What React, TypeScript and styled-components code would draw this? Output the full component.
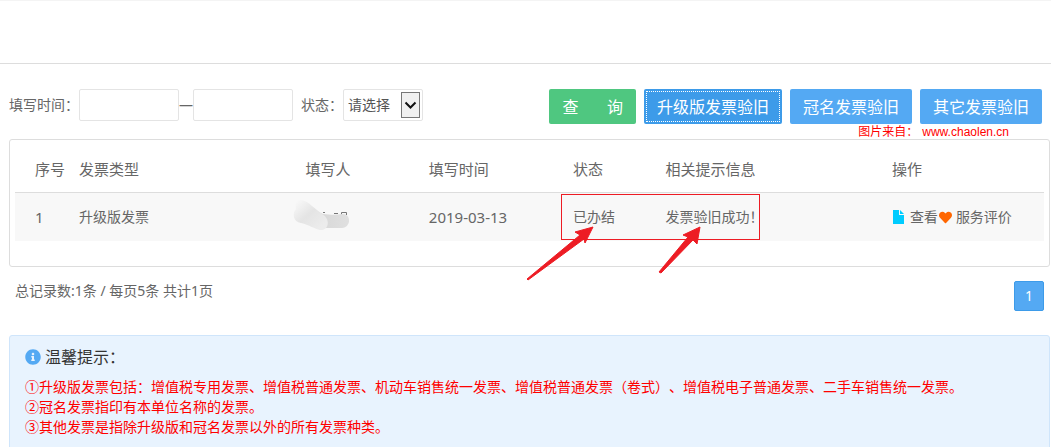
import React from 'react';
import styled, { createGlobalStyle } from 'styled-components';
import { FaHeart, FaInfoCircle } from 'react-icons/fa';

const GlobalStyle = createGlobalStyle`
  * { box-sizing: border-box; }
  body {
    margin: 0;
    background: #fff;
    color: #666;
    font: 14px/20px "Noto Sans", "Noto Sans CJK SC", sans-serif;
    text-spacing-trim: space-all;
  }
  button, input, select { font: inherit; }
`;

const TopBar = styled.header`
  height: 64px;
  border-top: 1px solid #f4f4f4;
  border-bottom: 1px solid #ddd;
`;

const Page = styled.main`
  padding: 25px 1px 0 9px;
`;

const Toolbar = styled.form`
  display: flex;
  align-items: flex-start;
  justify-content: space-between;
  padding-right: 8px;
`;

const Filters = styled.div`
  display: flex;
  align-items: center;
`;

const DateInput = styled.input`
  width: 100px;
  height: 32px;
  padding: 0 6px;
  border: 1px solid #e4e4e4;
  border-radius: 2px;
`;

const StatusLabel = styled.label`
  margin-left: 8px;
`;

const SelectBox = styled.div`
  position: relative;
`;

const Select = styled.select`
  display: block;
  width: 80px;
  height: 32px;
  padding: 0 20px 0 4px;
  border: 1px solid #e4e4e4;
  border-radius: 2px;
  background: #fff;
  color: #555;
  appearance: none;
`;

const SelectArrow = styled.svg`
  position: absolute;
  top: 3px;
  right: 3px;
  pointer-events: none;
`;

const Actions = styled.div`
  display: flex;
  gap: 8px;
`;

const ActionButton = styled.button<{ $tone?: 'green' | 'active' }>`
  height: 35px;
  padding: 0 13px;
  border: 0;
  border-radius: 2px;
  color: #fff;
  font-size: 16px;
  white-space: nowrap;
  background: ${({ $tone }) =>
    $tone === 'green' ? '#4fc780' : $tone === 'active' ? '#3d9be9' : '#54a9f3'};
  outline: ${({ $tone }) => ($tone === 'active' ? '1px dotted #fff' : 'none')};
  outline-offset: -3px;
`;

const Panel = styled.section`
  position: relative;
  margin-top: 15px;
  padding: 5px 5px 25px;
  border: 1px solid #ddd;
  border-radius: 3px;
`;

const Credit = styled.p`
  position: absolute;
  top: -17px;
  right: 40px;
  display: flex;
  gap: 4px;
  margin: 0;
  color: #f00;
  font: 12px/18px "Liberation Sans", "Noto Sans CJK SC", sans-serif;
`;

const Records = styled.table`
  width: 100%;
  table-layout: fixed;
  border-collapse: separate;
  border-spacing: 0;
`;

const Col = styled.col<{ $width?: string }>`
  width: ${({ $width }) => $width ?? 'auto'};
`;

const HeadCell = styled.th`
  height: 48px;
  padding: 0;
  border-bottom: 1px solid #ddd;
  font-size: 15px;
  font-weight: 400;
  text-align: left;
  &:first-child { padding-left: 20px; }
`;

const Cell = styled.td`
  position: relative;
  height: 48px;
  padding: 0;
  background: #f8f8f8;
  &:first-child { padding-left: 20px; }
`;

const Numeric = styled.span`
  font-size: 15px;
`;

const Smudge = styled.svg`
  position: absolute;
  top: 0;
  left: -20px;
`;

const RowActions = styled.div`
  display: flex;
  align-items: center;
  gap: 1px;
`;

const RowLink = styled.a`
  display: flex;
  align-items: center;
  gap: 4px;
  color: #666;
  text-decoration: none;
`;

const Callout = styled.svg`
  position: absolute;
  top: 53px;
  left: 49%;
  overflow: visible;
  pointer-events: none;
`;

const Footer = styled.div`
  display: flex;
  align-items: flex-start;
  justify-content: space-between;
  padding: 14px 6px 0;
`;

const PageButton = styled.button`
  width: 30px;
  height: 30px;
  padding: 0;
  border: 1px solid #3d9be9;
  border-radius: 2px;
  background: #54a9f3;
  color: #fff;
`;

const Notice = styled.section`
  margin-top: 24px;
  padding: 11px 15px 20px;
  border: 1px solid #cfe5fb;
  border-radius: 3px;
  background: #e8f3fe;
`;

const NoticeTitle = styled.h2`
  display: flex;
  align-items: center;
  gap: 4px;
  margin: 0 0 10px;
  color: #333;
  font-size: 16px;
  font-weight: 400;
  line-height: 20px;
`;

const NoticeText = styled.p`
  margin: 0;
  color: #f00;
`;

const headings = ['序号', '发票类型', '填写人', '填写时间', '状态', '相关提示信息', '操作'];
const widths = ['64px', '22%', '12%', '14%', '9%', '22%', undefined];
const notes = [
  '①升级版发票包括：增值税专用发票、增值税普通发票、机动车销售统一发票、增值税普通发票（卷式）、增值税电子普通发票、二手车销售统一发票。',
  '②冠名发票指印有本单位名称的发票。',
  '③其他发票是指除升级版和冠名发票以外的所有发票种类。',
];

export default function App() {
  return (
    <>
      <GlobalStyle />
      <TopBar />
      <Page>
        <Toolbar onSubmit={(e) => e.preventDefault()}>
          <Filters>
            <label htmlFor="from">填写时间：</label>
            <DateInput id="from" />
            <span>—</span>
            <DateInput id="to" aria-label="填写时间" />
            <StatusLabel htmlFor="status">状态：</StatusLabel>
            <SelectBox>
              <Select id="status">
                <option>请选择</option>
              </Select>
              <SelectArrow width="19" height="26" viewBox="0 0 19 26" aria-hidden="true">
                <rect x=".5" y=".5" width="18" height="25" fill="#f0f0f0" stroke="#777" />
                <path d="M4.5 10.5l5 5 5-5" fill="none" stroke="#111" strokeWidth="2" />
              </SelectArrow>
            </SelectBox>
          </Filters>
          <Actions>
            <ActionButton $tone="green">查&emsp;&nbsp;&nbsp;&nbsp;询</ActionButton>
            <ActionButton type="button" $tone="active">升级版发票验旧</ActionButton>
            <ActionButton type="button">冠名发票验旧</ActionButton>
            <ActionButton type="button">其它发票验旧</ActionButton>
          </Actions>
        </Toolbar>

        <Panel>
          <Credit>
            <span>图片来自：</span>
            <span>www.chaolen.cn</span>
          </Credit>
          <Records>
            <colgroup>
              {widths.map((w, i) => <Col key={i} $width={w} />)}
            </colgroup>
            <thead>
              <tr>{headings.map((h) => <HeadCell key={h} scope="col">{h}</HeadCell>)}</tr>
            </thead>
            <tbody>
              <tr>
                <Cell><Numeric>1</Numeric></Cell>
                <Cell>升级版发票</Cell>
                <Cell>
                  <Smudge width="80" height="48" viewBox="0 0 80 48" aria-hidden="true">
                    <defs>
                      <linearGradient id="smearLeft" gradientUnits="userSpaceOnUse" x1="12" y1="8" x2="36" y2="34">
                        <stop offset="0" stopColor="#f8f8f8" />
                        <stop offset=".5" stopColor="#e4e4e4" />
                        <stop offset="1" stopColor="#ececec" />
                      </linearGradient>
                      <linearGradient id="smearRight" gradientUnits="userSpaceOnUse" x1="30" y1="0" x2="64" y2="0">
                        <stop offset="0" stopColor="#d6d6d6" />
                        <stop offset="1" stopColor="#e0e0e0" />
                      </linearGradient>
                    </defs>
                    <path d="M38 19.500h2M49 20.500h4M56.500 22v-2.500h5V22" fill="none" stroke="#777" />
                    <path
                      d="M28 16L38 21C46 22 52 22 57 21C66 20 67 34 57 35H40L28 30Z"
                      fill="url(#smearRight)"
                    />
                    <path
                      d="M11 16C8 3 20 6 27 13L37 21C46 26 44 38 35 37C30 36 24 32 16 30C8 29 7 20 11 16Z"
                      fill="url(#smearLeft)"
                    />
                  </Smudge>
                </Cell>
                <Cell><Numeric>2019-03-13</Numeric></Cell>
                <Cell>已办结</Cell>
                <Cell>发票验旧成功！</Cell>
                <Cell>
                  <RowActions>
                    <RowLink href="#view">
                      <svg width="14" height="14" viewBox="0 0 14 14" fill="#0cf" aria-hidden="true">
                        <path d="M1 0h6v5h5v9H1zM8 0l4 4H8z" />
                      </svg>
                      查看
                    </RowLink>
                    <RowLink href="#review">
                      <FaHeart size={13} color="#f60" aria-hidden="true" />
                      服务评价
                    </RowLink>
                  </RowActions>
                </Cell>
              </tr>
            </tbody>
          </Records>
          <Callout width="242" height="90" viewBox="0 0 242 90" aria-hidden="true">
            <rect x="42.500" y="1.500" width="198" height="45" fill="none" stroke="#ed1c24" />
            <path
              d="M74 34L56 39L61 42L8 86L9 87L65 46L66 50ZM181 34L164 42L169 44L140 79L142 80L174 47L178 51Z"
              fill="#ed1c24"
              stroke="#ed1c24"
              strokeLinejoin="round"
            />
          </Callout>
        </Panel>

        <Footer>
          <span>总记录数:1条 / 每页5条 共计1页</span>
          <PageButton type="button">1</PageButton>
        </Footer>

        <Notice>
          <NoticeTitle>
            <FaInfoCircle size={16} color="#54a9f3" aria-hidden="true" />
            温馨提示：
          </NoticeTitle>
          {notes.map((n) => <NoticeText key={n}>{n}</NoticeText>)}
        </Notice>
      </Page>
    </>
  );
}
